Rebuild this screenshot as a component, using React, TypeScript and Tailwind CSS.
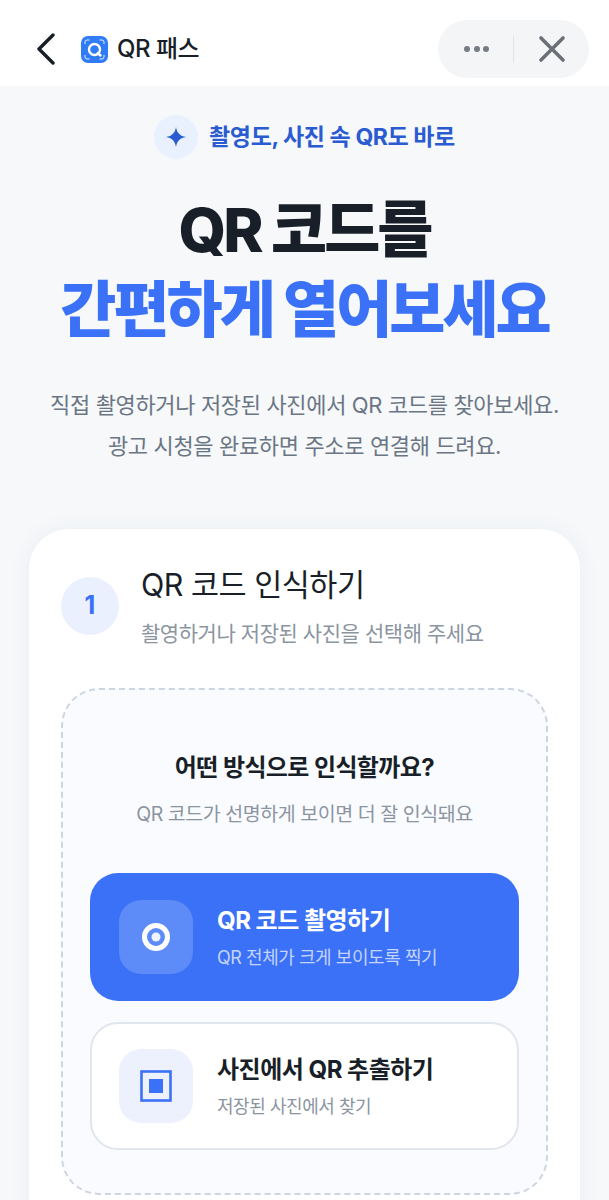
const font = "font-['Inter','Noto_Sans_CJK_KR',sans-serif]";

function AppLogo() {
  return (
    <svg width="27" height="27" viewBox="0 0 27 27" fill="none">
      <defs>
        <linearGradient id="logo" x1="0" y1="0" x2="27" y2="27">
          <stop offset="0" stopColor="#2f7df6" />
          <stop offset="1" stopColor="#5140d8" />
        </linearGradient>
      </defs>
      <rect width="27" height="27" rx="7" fill="url(#logo)" />
      <path d="M4 8V6A2 2 0 0 1 6 4H8.500M18.500 4H21A2 2 0 0 1 23 6V8M23 19V21A2 2 0 0 1 21 23H18.500M8.500 23H6A2 2 0 0 1 4 21V19" stroke="#e3ebff" strokeWidth="1" />
      <circle cx="13.500" cy="13.500" r="5.500" stroke="#fff" strokeWidth="2.400" />
      <path d="M16.800 17L19.500 19.500" stroke="#fff" strokeWidth="2.400" strokeLinecap="round" />
    </svg>
  );
}

function Header() {
  return (
    <header className="flex h-[86px] items-center bg-white pt-[12px] pr-[20px] pl-[36px]">
      <svg width="19" height="32" viewBox="0 0 19 32" fill="none">
        <path d="M17 2L3 16L17 30" stroke="#191f28" strokeWidth="3.400" strokeLinecap="round" strokeLinejoin="round" />
      </svg>
      <div className="ml-[26px] flex items-center gap-[9px]">
        <AppLogo />
        <span className="text-[24px] font-medium tracking-[-0.5px] text-[#191f28]">QR 패스</span>
      </div>
      <div className="ml-auto flex h-[58px] w-[151px] items-center rounded-full bg-[#f4f5f6]">
        <div className="flex flex-1 items-center justify-center gap-[3.500px] pl-[2px]">
          <span className="h-[6px] w-[6px] rounded-full bg-[#777c84]" />
          <span className="h-[6px] w-[6px] rounded-full bg-[#777c84]" />
          <span className="h-[6px] w-[6px] rounded-full bg-[#777c84]" />
        </div>
        <div className="h-[27px] w-px bg-[#e2e4e8]" />
        <div className="flex w-[75px] items-center justify-center">
          <svg width="28" height="28" viewBox="0 0 28 28" fill="none">
            <path d="M3 3L25 25M25 3L3 25" stroke="#6b7078" strokeWidth="3.600" strokeLinecap="round" />
          </svg>
        </div>
      </div>
    </header>
  );
}

function Hero() {
  return (
    <section className="flex flex-col items-center pt-[29px]">
      <div className="flex items-center gap-[11px]">
        <div className="flex h-[44px] w-[44px] items-center justify-center rounded-full bg-[#e8f1fd]">
          <svg width="20" height="20" viewBox="0 0 20 20">
            <path d="M10 0C10.800 5.800 14.200 9.200 20 10C14.200 10.800 10.800 14.200 10 20C9.200 14.200 5.800 10.800 0 10C5.800 9.200 9.200 5.800 10 0Z" fill="#2b5bd0" />
          </svg>
        </div>
        <span className="text-[23px] font-bold tracking-[-0.4px] text-[#2b5bd0]">촬영도, 사진 속 QR도 바로</span>
      </div>
      <h1 className="mt-[31px] text-center text-[61px] leading-[80px] font-extrabold tracking-[-3px] text-[#191f28]">
        QR 코드를
        <br />
        <span className="text-[#3b71f6]">간편하게 열어보세요</span>
      </h1>
      <p className="mt-[35px] text-center text-[22px] leading-[41px] tracking-[-0.35px] text-[#6b7684]">
        직접 촬영하거나 저장된 사진에서 QR 코드를 찾아보세요.
        <br />
        광고 시청을 완료하면 주소로 연결해 드려요.
      </p>
    </section>
  );
}

function OptionButton({ primary, title, sub, icon }: { primary?: boolean; title: string; sub: string; icon: React.ReactNode }) {
  return (
    <div
      className={
        primary
          ? 'flex h-[128px] items-center gap-[24px] rounded-[28px] bg-[#3b71f6] pl-[29px]'
          : 'flex h-[128px] items-center gap-[24px] rounded-[28px] border-2 border-[#e1e6ee] bg-white pl-[27px]'
      }
    >
      <div className={primary ? 'flex h-[74px] w-[74px] items-center justify-center rounded-[22px] bg-[#5d8bf8]' : 'flex h-[74px] w-[74px] items-center justify-center rounded-[22px] bg-[#edf1fe]'}>
        {icon}
      </div>
      <div className="flex flex-col gap-[8px] pt-[2px]">
        <span className={primary ? 'text-[24px] leading-[32px] font-bold tracking-[-0.5px] text-white' : 'text-[24px] leading-[32px] font-bold tracking-[-0.5px] text-[#191f28]'}>{title}</span>
        <span className={primary ? 'text-[18px] leading-[26px] tracking-[-0.45px] text-[#c4d4fc]' : 'text-[18px] leading-[26px] tracking-[-0.45px] text-[#8b95a1]'}>{sub}</span>
      </div>
    </div>
  );
}

function StepCard() {
  return (
    <section className="mx-[29px] mt-[62px] h-[700px] rounded-t-[40px] bg-white px-[32px] pt-[34px] shadow-[0_0_24px_rgba(30,50,90,0.05)]">
      <div className="flex">
        <div className="mt-[14px] flex h-[58px] w-[58px] items-center justify-center rounded-full bg-[#ebf0fe] text-[25px] font-bold text-[#3b71f6]">1</div>
        <div className="ml-[22px] flex flex-col">
          <span className="text-[30.500px] leading-[44px] tracking-[-0.5px] text-[#191f28]">QR 코드 인식하기</span>
          <span className="mt-[12px] text-[21px] leading-[30px] tracking-[-0.45px] text-[#8b95a1]">촬영하거나 저장된 사진을 선택해 주세요</span>
        </div>
      </div>
      <div className="mt-[39px] h-[507px] rounded-[38px] border-2 border-dashed border-[#cdd5e0] bg-[#fafbfe] px-[27px] pt-[61px]">
        <p className="text-center text-[24px] leading-[34px] font-bold tracking-[-0.6px] text-[#191f28]">어떤 방식으로 인식할까요?</p>
        <p className="mt-[14px] text-center text-[19.500px] leading-[30px] tracking-[-0.45px] text-[#8b95a1]">QR 코드가 선명하게 보이면 더 잘 인식돼요</p>
        <div className="mt-[44px] flex flex-col gap-[21px]">
          <OptionButton
            primary
            title="QR 코드 촬영하기"
            sub="QR 전체가 크게 보이도록 찍기"
            icon={
              <svg width="28" height="28" viewBox="0 0 28 28" fill="none">
                <circle cx="14" cy="14" r="11.500" stroke="#fff" strokeWidth="5" />
                <circle cx="14" cy="14" r="4.500" fill="#eef3fe" />
              </svg>
            }
          />
          <OptionButton
            title="사진에서 QR 추출하기"
            sub="저장된 사진에서 찾기"
            icon={
              <svg width="32" height="32" viewBox="0 0 32 32" fill="none">
                <rect x="1.500" y="1.500" width="29" height="29" stroke="#3b71f6" strokeWidth="2.600" />
                <rect x="9" y="9" width="14" height="14" fill="#3b71f6" />
              </svg>
            }
          />
        </div>
      </div>
    </section>
  );
}

export default function App() {
  return (
    <div className={`h-[1200px] w-[609px] overflow-hidden bg-[#f6f8fa] ${font}`}>
      <Header />
      <Hero />
      <StepCard />
    </div>
  );
}
